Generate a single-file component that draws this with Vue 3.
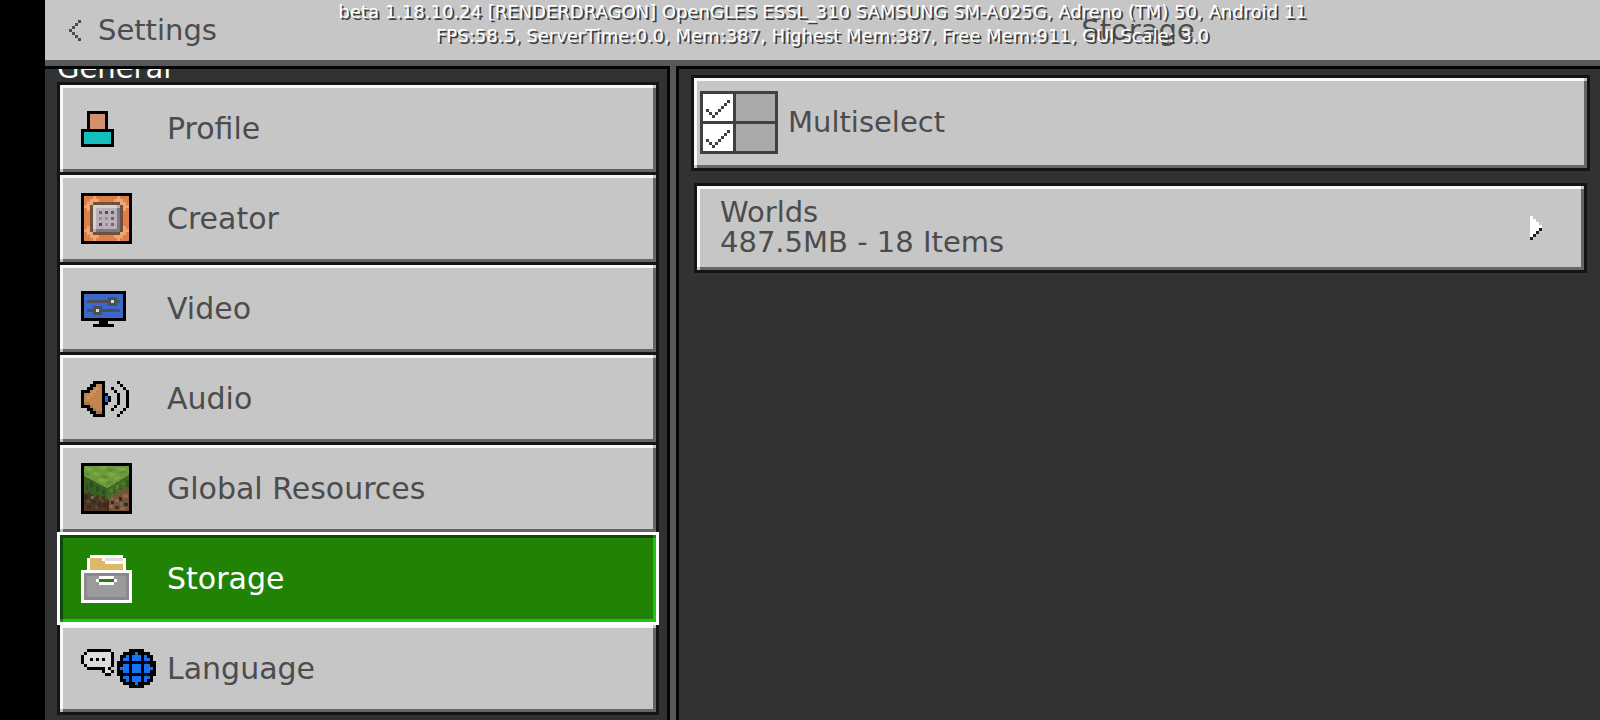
<script setup>
import { ref } from 'vue';

const palette = {
  K: '#000000',
  W: '#ffffff',
  // profile
  s: '#d3906c',
  t: '#15bfbd',
  // creator
  o: '#dc8045',
  l: '#eba779',
  b: '#73503a',
  h: '#d3d1d8',
  g: '#b5b2bb',
  d: '#7c7986',
  1: '#a5555a',
  2: '#922f35',
  3: '#4c6b3a',
  4: '#b98a4b',
  5: '#c67d80',
  6: '#b9443f',
  // video
  v: '#3b69c9',
  n: '#4b4f58',
  w: '#d8d8d8',
  // audio
  a: '#c1854f',
  c: '#cf9566',
  e: '#a87647',
  u: '#1473f4',
  // storage
  y: '#dcb964',
  p: '#dedee0',
  m: '#9b9b9b',
  q: '#8a8a8a',
  // language
  f: '#dcdcdc',
};

const sprites = {
  profile: [
    '..KKKKKKK..',
    '..KsssssK..',
    '..KsssssK..',
    '..KsssssK..',
    '..KsssssK..',
    '..KsssssK..',
    'KKKKKKKKKKK',
    'KtttttttttK',
    'KtttttttttK',
    'KtttttttttK',
    'KtttttttttK',
    'KKKKKKKKKKK',
  ],
  creator: [
    'KKKKKKKKKKKKKKKKK',
    'KoooloooooooloooK',
    'KoolllooooolllooK',
    'KollbbbbbbbbblloK',
    'KllbhhhhhhhhgbllK',
    'KolbhgggggggdbloK',
    'Koobhg1g2g3gdbooK',
    'KoobhgggggggdbooK',
    'Koobhg4g5g6gdbooK',
    'KoobhgggggggdbooK',
    'Koobhg2g5g1gdbooK',
    'KolbhgggggggdbloK',
    'KllbgddddddddbllK',
    'KollbbbbbbbbblloK',
    'KoolllooooolllooK',
    'KoooloooooooloooK',
    'KKKKKKKKKKKKKKKKK',
  ],
  video: [
    'KKKKKKKKKKKKKKK',
    'KvvvvvvvvvvvvvK',
    'KvvvvvvvvnnnvvK',
    'KvnnnnnnnnwnnvK',
    'KvvvvvvvvnnnvvK',
    'KvvvnnnvvvvvvvK',
    'KvnnnwnnnnnnnvK',
    'KvvvnnnvvvvvvvK',
    'KvvvvvvvvvvvvvK',
    'KKKKKKKKKKKKKKK',
    '......KKK......',
    '....KKKKKKK....',
  ],
  audio: [
    '....KKKK....K...',
    '...KKaaK.....K..',
    '..KKacaK..K...K.',
    'KKKacaaK...K...K',
    'KaacaaaKK...K..K',
    'KacaaaaKuK..K..K',
    'KaaaaaaKuK..K..K',
    'KeeaaaaKK...K..K',
    'KKKeaaaK...K...K',
    '..KKeaaK..K...K.',
    '...KKeeK.....K..',
    '....KKKK....K...',
  ],
  storage: [
    '...WWWWWWWWWWW...',
    '..WyyyyWppppppW..',
    '..WyyyyyWWWWWWW..',
    '..WyyyyyyyyyyyW..',
    '..WyyyyyyyyyyyW..',
    'WWWWWWWWWWWWWWWWW',
    'WqqqqqqqqqqqqqqqW',
    'WqmmmmWWWWWmmmmqW',
    'WqmmmW.....WmmmqW',
    'WqmmmmWWWWWmmmmqW',
    'WqmmmmmmmmmmmmmqW',
    'WqmmmmmmmmmmmmmqW',
    'WqmmmmmmmmmmmmmqW',
    'WqmmmmmmmmmmmmmqW',
    'WqqqqqqqqqqqqqqqW',
    'WWWWWWWWWWWWWWWWW',
  ],
  language: [
    '..KKKKKKKK......KKKKK....',
    '.KffffffffK...KKKKuKKKK..',
    'KfffffffffK..KKuKuuuKuKK.',
    'KffKfKfKffK..KuuKuuuKuuK.',
    'KfffffffffK.KKKKKKKKKKKKK',
    '.KffffffffK.KKuuKuuuKuuKK',
    '..KKKKKKfK..KuuuKuuuKuuuK',
    '.......KffK.KKuuKuuuKuuKK',
    '........KK..KKKKKKKKKKKKK',
    '.............KuuKuuuKuuK.',
    '.............KKuKuuuKuKK.',
    '..............KKKKuKKKK..',
    '................KKKKK....',
  ],
};

// Turns rows of letters into horizontal runs of one colour
const toSprite = (rows) => {
  const runs = [];
  rows.forEach((row, y) => {
    let x = 0;
    while (x < row.length) {
      let end = x + 1;
      while (row[end] === row[x]) end++;
      if (row[x] !== '.') runs.push({ x, y, width: end - x, fill: palette[row[x]] });
      x = end;
    }
  });
  return { width: rows[0].length, height: rows.length, runs };
};

const icons = Object.fromEntries(Object.entries(sprites).map(([name, rows]) => [name, toSprite(rows)]));

const sections = [
  { id: 'profile', label: 'Profile' },
  { id: 'creator', label: 'Creator' },
  { id: 'video', label: 'Video' },
  { id: 'audio', label: 'Audio' },
  { id: 'resources', label: 'Global Resources' },
  { id: 'storage', label: 'Storage' },
  { id: 'language', label: 'Language' },
];

const active = ref('storage');
</script>

<template>
  <div class="screen">
    <header class="top-bar">
      <button class="back">
        <svg width="12" height="21" viewBox="0 0 4 7" shape-rendering="crispEdges" aria-hidden="true">
          <path d="M3 0h1v1h-1zM2 1h1v1h-1zM1 2h1v1h-1zM0 3h1v1h-1zM1 4h1v1h-1zM2 5h1v1h-1zM3 6h1v1h-1z" fill="#4c4c4c" />
        </svg>
        <span>Settings</span>
      </button>
      <h1>Storage</h1>
      <div class="debug">
        <p>beta 1.18.10.24 [RENDERDRAGON] OpenGLES ESSL_310 SAMSUNG SM-A025G, Adreno (TM) 50, Android 11</p>
        <p>FPS:58.5, ServerTime:0.0, Mem:387, Highest Mem:387, Free Mem:911, GUI Scale: 3.0</p>
      </div>
    </header>

    <div class="panes">
      <nav class="sidebar">
        <h2>General</h2>
        <button v-for="section in sections" :key="section.id" class="tile section"
          :class="{ active: active === section.id }" @click="active = section.id">
          <span class="icon">
            <svg v-if="section.id === 'resources'" width="51" height="51" viewBox="0 0 51 51"
              shape-rendering="crispEdges" aria-hidden="true">
              <rect width="51" height="51" fill="#000" />
              <rect x="3" y="3" width="45" height="45" fill="#6d9a3b" />
              <!-- left side -->
              <path d="M3 14L26 26V48H3z" fill="#4b3424" />
              <path d="M3 13L26 25V36H24V33H21V37H18V32H15V34H12V31H9V29H6V30H3z" fill="#3a5f23" />
              <!-- right side -->
              <path d="M26 26L48 13V48H26z" fill="#765238" />
              <path d="M26 25L48 12V27H45V24H42V29H39V27H36V33H33V30H30V34H28V37H26z" fill="#426b26" />
              <!-- grass top -->
              <path d="M6 4l7 2-4 2-6-2zM20 3h8l-5 3-6-1zM38 4l8 2-5 2-7-2zM14 9l7 2-4 2-7-2zM29 9l8 2-5 3-7-2zM20 15l7 2-4 3-7-3zM36 13l5 1-6 3-4-2z" fill="#7aa943" />
              <path d="M28 5l6 2-4 2-6-2zM4 9l6 2-3 2-4-1zM22 12l6 2-4 2-6-2zM41 8l5 1-5 2-4-1zM28 18l5 1-5 3-4-2z" fill="#5f8d33" />
              <!-- shade on the sides -->
              <path d="M9 19h3v5h-3zM15 23h3v6h-3zM21 27h3v4h-3zM5 22h2v6h-2z" fill="#2e4d1d" />
              <path d="M29 26h3v3h-3zM35 22h3v4h-3zM41 19h2v3h-2z" fill="#54802f" />
              <path d="M32 26h2v4h-2zM38 23h2v4h-2zM45 17h3v7h-3z" fill="#36591f" />
              <!-- dirt -->
              <path d="M3 32h4v4h-4zM11 37h4v3h-4zM17 40h3v4h-3zM6 42h4v3h-4zM22 40h4v4h-4zM30 38h3v3h-3zM38 34h3v4h-3zM43 40h4v3h-4zM34 43h4v3h-4zM26 37h2v11h-2z" fill="#3a291d" />
              <path d="M6 37h3v3h-3zM14 43h3v3h-3zM20 37h3v2h-3z" fill="#634730" />
              <path d="M28 42h4v3h-4zM34 36h4v3h-4zM42 31h5v4h-5zM39 44h5v3h-5z" fill="#91664a" />
              <path d="M10 33h3v3h-3zM30 34h3v3h-3zM39 39h3v4h-3z" fill="#6b6967" />
            </svg>
            <svg v-else :width="icons[section.id].width * 3" :height="icons[section.id].height * 3"
              :viewBox="`0 0 ${icons[section.id].width} ${icons[section.id].height}`"
              shape-rendering="crispEdges" aria-hidden="true">
              <rect v-for="(run, i) in icons[section.id].runs" :key="i" :x="run.x" :y="run.y" :width="run.width"
                height="1" :fill="run.fill" />
            </svg>
          </span>
          <span>{{ section.label }}</span>
        </button>
      </nav>

      <main class="content">
        <button class="tile multiselect">
          <svg width="78" height="63" viewBox="0 0 26 21" shape-rendering="crispEdges" aria-hidden="true">
            <rect width="26" height="21" fill="#404040" />
            <path d="M1 1h10v9h-10zM1 11h10v9h-10z" fill="#fff" />
            <path d="M12 1h13v9h-13zM12 11h13v9h-13z" fill="#a9a9a9" />
            <path v-for="y in [3, 13]" :key="y"
              :d="`M9 ${y}h1v1h-1v1h-1v1h-1v1h-1v1h-1v1h-1v-1h1v-1h1v-1h1v-1h1v-1h1zM2 ${y + 3}h1v1h-1zM3 ${y + 4}h1v1h-1zM4 ${y + 5}h1v1h-1z`"
              fill="#404040" />
          </svg>
          <span>Multiselect</span>
        </button>
        <button class="tile worlds">
          <span class="summary">
            <span>Worlds</span>
            <span>487.5MB - 18 Items</span>
          </span>
          <svg width="12" height="24" viewBox="0 0 4 8" shape-rendering="crispEdges" aria-hidden="true">
            <path d="M0 0h1v1h1v1h1v1h1v1h-1v1h-1v1h-1v1h-1z" fill="#fff" />
            <path d="M3 4h1v1h-1zM2 5h1v1h-1zM1 6h1v1h-1zM0 7h1v1h-1z" fill="#1e1e1f" />
          </svg>
        </button>
      </main>
    </div>
  </div>
</template>

<style>
body {
  margin: 0;
  background: #000;
}
</style>

<style scoped>
.screen {
  display: flex;
  flex-direction: column;
  height: 100vh;
  box-sizing: border-box;
  padding-left: 45px;
  overflow: hidden;
  background: #000;
  color: #4c4c4c;
  font-family: 'DejaVu Sans', sans-serif;
  font-size: 29px;
  line-height: 30px;
}

h1,
h2,
p {
  margin: 0;
  font-size: inherit;
  font-weight: 400;
}

button {
  margin: 0;
  border: none;
  background: none;
  color: inherit;
  font: inherit;
  text-align: left;
  cursor: pointer;
}

svg {
  display: block;
  flex: none;
}

.top-bar {
  position: relative;
  display: flex;
  align-items: center;
  flex: none;
  height: 60px;
  background: #c6c6c6;
  border-bottom: 6px solid #58585a;
}

.back {
  display: flex;
  align-items: center;
  gap: 17px;
  flex: 0 0 40%;
  box-sizing: border-box;
  padding: 0 24px;
}

h1 {
  flex: 1;
  padding-left: 9px;
  text-align: center;
}

.debug {
  position: absolute;
  inset: 0;
  color: #fff;
  font-size: 18px;
  line-height: 24px;
  text-align: center;
  text-shadow: 2px 2px #3f3f3f;
  white-space: nowrap;
  pointer-events: none;
}

.panes {
  display: flex;
  flex: 1;
  min-height: 0;
}

.sidebar,
.content {
  box-sizing: border-box;
  border-top: 3px solid #040606;
  background: #313233;
}

.sidebar {
  flex: 0 0 40%;
  padding: 0 8px 0 12px;
  overflow: hidden;
}

.sidebar h2 {
  display: flex;
  align-items: flex-end;
  height: 13px;
  overflow: hidden;
  color: #fff;
  line-height: 28px;
}

.content {
  flex: 1;
  margin-left: 9px;
  padding: 6px 10px 0 12px;
  border-left: 3px solid #040606;
  box-shadow: -6px 0 #58585a, -9px 0 #040606;
}

.tile {
  --light: #f7f7f7;
  --dark: #656565;
  --face: #c6c6c6;
  display: flex;
  align-items: center;
  box-sizing: border-box;
  width: 100%;
  border: 3px solid #141414;
  background:
    linear-gradient(var(--face), var(--face)) top right / 3px 3px no-repeat,
    linear-gradient(var(--face), var(--face)) bottom left / 3px 3px no-repeat,
    linear-gradient(var(--light), var(--light)) top / 100% 3px no-repeat,
    linear-gradient(var(--light), var(--light)) left / 3px 100% no-repeat,
    linear-gradient(var(--dark), var(--dark)) bottom / 100% 3px no-repeat,
    linear-gradient(var(--dark), var(--dark)) right / 3px 100% no-repeat,
    var(--face);
}

.section {
  height: 93px;
  padding: 0 21px;
  font-size: 30px;
}

.section + .section {
  margin-top: -3px;
}

.icon {
  flex: 0 0 86px;
}

.section.active {
  --light: #0b4a0b;
  --dark: #22c513;
  --face: #218306;
  position: relative;
  border-color: #fff;
  color: #fff;
}

.multiselect {
  gap: 10px;
  height: 96px;
  padding: 0 6px 2px;
}

.worlds {
  justify-content: space-between;
  width: calc(100% - 6px);
  height: 90px;
  margin: 12px 3px 0;
  padding: 0 42px 0 23px;
}

.summary {
  display: flex;
  flex-direction: column;
  padding-bottom: 2px;
}
</style>
